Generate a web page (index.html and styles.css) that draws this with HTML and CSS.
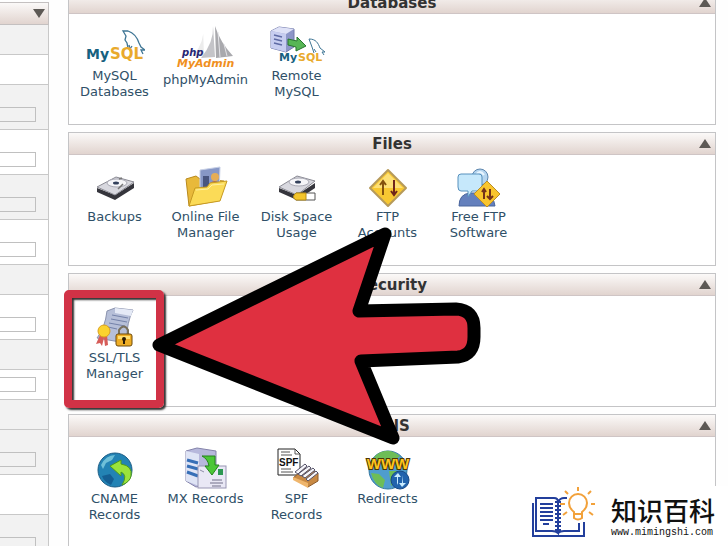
FILE: index.html
```html
<!DOCTYPE html>
<html lang="en">
<head>
  <meta charset="UTF-8">
  <meta name="viewport" content="width=device-width, initial-scale=1.0">
  <title>Control Panel</title>
  <link rel="stylesheet" href="styles.css">
</head>
<body>
  <div class="page">
    <aside class="stats">
      <div class="stats-head"><button class="toggle down" aria-label="Toggle stats"></button></div>
      <div class="stat short alt"></div>
      <div class="stat short"></div>
      <div class="stat alt"><div class="meter"></div></div>
      <div class="stat"><div class="meter"></div></div>
      <div class="stat alt"><div class="meter"></div></div>
      <div class="stat"><div class="meter"></div></div>
      <div class="stat short alt"></div>
      <div class="stat"><div class="meter"></div></div>
      <div class="stat short alt"></div>
      <div class="stat short"><div class="meter"></div></div>
      <div class="stat short alt"></div>
      <div class="stat alt"><div class="meter"></div></div>
      <div class="stat medium"></div>
      <div class="stat alt"><div class="meter"></div></div>
    </aside>

    <main class="panels">
      <section class="panel">
        <header class="panel-head"><h2>Databases</h2><button class="toggle" aria-label="Collapse Databases"></button></header>
        <div class="items">
          <a class="item" href="#">
            <svg class="icon" viewBox="0 0 60 48">
              <path d="M43 28l-1-5-2-3 1-4-3-5 5 0c6 2 9 6 11 12l2 4 4 3-4 0 2 4M44 25l1 4 2-3" fill="none" stroke="#3f7695" stroke-width="1.3"/>
              <text class="logo" x="1" y="39" font-size="14" fill="#17617f">My</text>
              <text class="logo" x="25" y="39" font-size="15" fill="#e9aa2c">SQL</text>
            </svg>
            MySQL Databases
          </a>
          <a class="item" href="#">
            <svg class="icon tall" viewBox="0 0 60 52">
              <path d="M27 8q2 12-9 27l10 1z" fill="#ececec"/>
              <path d="M37 6q1 16-12 32l14-1z" fill="#c4c4c8"/>
              <path d="M39 6l1 32 17-2Q44 22 39 6z" fill="#a9a9ad"/>
              <path d="M42 12l2 25M48 24l3 12" stroke="#e4e4e8"/>
              <text class="logo slant" x="6" y="36" font-size="10" fill="#262673">php</text>
              <text class="logo slant" x="1" y="47" font-size="11" fill="#f0901e">MyAdmin</text>
            </svg>
            phpMyAdmin
          </a>
          <a class="item" href="#">
            <svg class="icon" viewBox="0 0 60 48">
              <path d="M4 11l8-4 15 2v18l-8 5-15-4z" fill="#8d96c8" stroke="#737bab"/>
              <path d="M4 11l15 3v18L4 28z" fill="#c7cdf0"/>
              <path d="M4 11l8-4 15 2-8 5z" fill="#dfe2f7"/>
              <path d="M7 15l8 2M7 19l8 2M7 23l8 2" stroke="#5e6aa4" stroke-width="1.5"/>
              <path d="M21 19l9 2v-4l9 9-10 5v-4l-8-2z" fill="#57b655" stroke="#29752f"/>
              <path d="M47 33l-2-6-3-8c7 0 9 4 11 9l5 4-3 0 2 3M47 29l2 3" fill="none" stroke="#3f7695"/>
              <text class="logo" x="12" y="41" font-size="11" fill="#17617f">My</text>
              <text class="logo" x="31" y="41" font-size="11" fill="#e9aa2c">SQL</text>
            </svg>
            Remote MySQL
          </a>
        </div>
      </section>

      <section class="panel">
        <header class="panel-head"><h2>Files</h2><button class="toggle" aria-label="Collapse Files"></button></header>
        <div class="items">
          <a class="item" href="#">
            <svg class="icon" viewBox="0 0 60 48">
              <path d="M12 27l18 7 19-12v5L30 39l-18-8z" fill="#35353c"/>
              <path d="M12 26l19-10 18 5-19 13z" fill="#d8d8df" stroke="#8b8b94"/>
              <ellipse cx="32" cy="22" rx="10" ry="4" fill="#f5f5f8" stroke="#a9a9b4"/>
              <ellipse cx="31" cy="22" rx="3" ry="1.5" fill="#33415c"/>
              <path d="M33 28l5-5M34 18l3-1" stroke="#777" stroke-width="1.5"/>
            </svg>
            Backups
          </a>
          <a class="item" href="#">
            <svg class="icon" viewBox="0 0 60 48">
              <path d="M10 18l10-3 4 3 24 2-7 20-28 5z" fill="#e8b93a" stroke="#b98a1d"/>
              <path d="M24 9l20-3-1 26-19 1z" fill="#8797c6" stroke="#c7d0e6"/>
              <path d="M27 15h6v14h-6z" fill="#49557f"/>
              <circle cx="39" cy="16" r="4" fill="#e6ad55"/>
              <path d="M34 22q5-4 9 0v8h-9z" fill="#b97242"/>
              <path d="M13 45l6-18 12-1 3-4 17-2-7 20z" fill="#fbdb57" stroke="#c79a22"/>
              <path d="M20 29l12-1 4-4 12-1" fill="none" stroke="#fff0a2"/>
            </svg>
            Online File Manager
          </a>
          <a class="item" href="#">
            <svg class="icon" viewBox="0 0 60 48">
              <path d="M12 27l18 7 18-12v5L30 39l-18-8z" fill="#35353c"/>
              <path d="M12 26l18-11 18 5-18 14z" fill="#d8d8df" stroke="#8b8b94"/>
              <ellipse cx="32" cy="21" rx="10" ry="4" fill="#f5f5f8" stroke="#a9a9b4"/>
              <ellipse cx="31" cy="21" rx="3" ry="1.5" fill="#33415c"/>
              <path d="M29 32h19v7H29q-5-3 0-7z" fill="#fff" stroke="#555"/>
              <path d="M29 32h10v7H29q-5-3 0-7z" fill="#f3c52c" stroke="#b88d15"/>
            </svg>
            Disk Space Usage
          </a>
          <a class="item" href="#">
            <svg class="icon" viewBox="0 0 60 48">
              <path d="M30 9l18 18-18 18-18-18z" fill="#f8c832" stroke="#b69a5a" stroke-width="2" stroke-linejoin="round"/>
              <path d="M30 12l15 15H15z" fill="#fde076"/>
              <path d="M25 34V21M22 24l3-4 3 4" fill="none" stroke="#84520e" stroke-width="2"/>
              <path d="M36 19v14M33 30l3 4 3-4" fill="none" stroke="#70251a" stroke-width="2"/>
            </svg>
            FTP<br>Accounts
          </a>
          <a class="item" href="#">
            <svg class="icon" viewBox="0 0 60 48">
              <path d="M10 45q0-12 11-13h12q12 2 13 13z" fill="#6480bd" stroke="#4b669d"/>
              <circle cx="31" cy="16" r="8" fill="#b5d5ef" stroke="#5d86ae"/>
              <path d="M27 14q4-6 8 0" fill="none" stroke="#eaf6ff" stroke-width="2"/>
              <path d="M12 13h18q3 0 3 3v10q0 4-3 4h-7l-4 6v-6h-7q-3 0-3-4V16q0-3 3-3z" fill="#c6e8fb" stroke="#5790bd"/>
              <path d="M38 20l13 13-13 13-13-13z" fill="#f9c52d" stroke="#b98e27"/>
              <path d="M35 38v-9M33 31l2-3 2 3M41 28v9M38 35l3 3 3-3" fill="none" stroke="#74321a" stroke-width="2"/>
            </svg>
            Free FTP Software
          </a>
        </div>
      </section>

      <section class="panel">
        <header class="panel-head"><h2>Security</h2><button class="toggle" aria-label="Collapse Security"></button></header>
        <div class="items">
          <a class="item marked" href="#">
            <svg class="icon" viewBox="0 0 60 48">
              <path d="M22 9l8-3 18 2q-6 11-7 33l-29-5q8-10 10-27z" fill="#b6bfd8" stroke="#8b93ae"/>
              <path d="M30 6l18 2-2 6-16-3z" fill="#e5eaf6"/>
              <path d="M27 13l16 3M26 17l16 3M24 21l16 3M23 25l9 2" stroke="#7482a9"/>
              <path d="M15 33l-4 9 4-1 2 3 2-8 1 8 3-1-1-10z" fill="#d65c58"/>
              <circle cx="19" cy="29" r="6" fill="#fbd22e" stroke="#dca11c"/>
              <path d="M34 33v-5q5-7 9 0v5" fill="none" stroke="#78705c" stroke-width="2"/>
              <rect x="31" y="32" width="16" height="12" rx="2" fill="#efae25" stroke="#6e4a0b"/>
              <path d="M33 34h12v3H33z" fill="#ffdf72"/>
              <circle cx="39" cy="37" r="2" fill="#2a1a03"/>
              <path d="M39 37v5" stroke="#2a1a03" stroke-width="2"/>
            </svg>
            SSL/TLS Manager
          </a>
        </div>
      </section>

      <section class="panel">
        <header class="panel-head"><h2>DNS</h2><button class="toggle" aria-label="Collapse DNS"></button></header>
        <div class="items">
          <a class="item" href="#">
            <svg class="icon" viewBox="0 0 60 48">
              <circle cx="30" cy="27" r="17" fill="#2383b4" stroke="#1c5d86"/>
              <path d="M16 22q5-10 14-10l-3 5-6 3-3 6z" fill="#6fc0d8"/>
              <path d="M17 33l8-2 4 5-3 6q-7-3-9-9z" fill="#155f93"/>
              <path d="M25 23l11-6v4q12 2 10 12-1 6-9 9 6-10-1-13v4z" fill="#9be33b" stroke="#4d9a1c"/>
            </svg>
            CNAME Records
          </a>
          <a class="item" href="#">
            <svg class="icon" viewBox="0 0 60 48">
              <path d="M10 8l11-3 19 3v32l-20 4-10-6z" fill="#b7b8dc" stroke="#8483aa"/>
              <path d="M10 8l13 3v32l-13-5z" fill="#dfe4f5"/>
              <path d="M11 17l11 3M11 23l11 3M11 29l11 4" stroke="#376fb7" stroke-width="3"/>
              <rect x="22" y="23" width="28" height="22" fill="#e9e8f5" stroke="#9896b3"/>
              <path d="M36 37h10M34 40h13M36 43h9" stroke="#716f88"/>
              <rect x="42" y="26" width="5" height="6" fill="#2c9851"/>
              <path d="M24 27l4 2" stroke="#8e8da8"/>
              <path d="M26 13h13v9h4l-7 10-7-9h4q-1-7-7-10z" fill="#4cc737" stroke="#25851c"/>
            </svg>
            MX Records
          </a>
          <a class="item" href="#">
            <svg class="icon" viewBox="0 0 60 48">
              <path d="M11 6h17l5 5v21H11z" fill="#fff" stroke="#222"/>
              <path d="M28 6v5h5M14 9h9M14 12h11M14 26h10M14 29h12" fill="none" stroke="#555"/>
              <text class="spf" x="12" y="23">SPF</text>
              <path d="M26 35l15 9 10-6v-8l-13-5z" fill="#c88943" stroke="#8d5b2b"/>
              <path d="M28 29l10-8 2 2-9 8zM31 31l11-8 2 2-10 8zM35 33l11-8 2 2-10 8zM39 36l10-8 2 2-10 8z" fill="#f6f6fa" stroke="#555268"/>
              <path d="M26 34l15 6v5l-15-8z" fill="#efb66d"/>
            </svg>
            SPF<br>Records
          </a>
          <a class="item" href="#">
            <svg class="icon" viewBox="0 0 60 48">
              <circle cx="30" cy="27" r="19" fill="#4f9dce" stroke="#2d759f"/>
              <path d="M16 14q12-12 26-1l-5 4H18zM13 30l8 1 6 6-2 8q-9-3-12-15zM31 28l12 0-6 11-4 4z" fill="#6dbd57"/>
              <text class="www" x="30" y="26" text-anchor="middle">WWW</text>
              <circle cx="42" cy="37" r="9" fill="#2163ad" stroke="#174885"/>
              <path d="M39 42v-8h-3l4-4 3 4h-3v6zM45 32v8h3l-4 4-3-4h3" fill="#c9ecff"/>
            </svg>
            Redirects
          </a>
        </div>
      </section>
    </main>

    <svg class="pointer" viewBox="0 0 332 222" aria-hidden="true">
      <path d="M9 119L235 8 209 85 306 83Q324 84 324 102V111Q324 129 308 131L211 135 243 212Z"/>
    </svg>

    <div class="brand">
      <svg class="brand-mark" viewBox="0 -6 66 50" fill="none" stroke="#233f9c" stroke-width="2">
        <path d="M2 7v33h51V26M5 2h18q4 0 4 4v31q-2-2-6-2H5zM27 6q2-4 6-4h3M48 27v8H33q-4 0-6 2"/>
        <path d="M9 8h13M9 12h13M9 16h13M9 20h13M9 24h13M12 28h6"/>
        <path d="M24 6h6M24 10h6M24 14h6M24 18h6M24 22h6M24 26h6M24 30h6M24 34h6"/>
        <g stroke="#f2a13a">
          <path d="M43 16q-5-4-5-9a9 9 0 0 1 18 0q0 5-5 9v6q-4 3-8 0zM43 18h8"/>
          <path d="M47-5v-4M37-2l-3-3M57-2l3-3M34 8h-5M60 8h4M36 16l-4 3M58 16l4 3"/>
        </g>
      </svg>
      <div class="brand-text">
        <div class="brand-name" lang="zh">知识百科</div>
        <div class="brand-url">www.mimingshi.com</div>
      </div>
    </div>
  </div>
</body>
</html>
```
FILE: styles.css
```css
* {
  box-sizing: border-box;
}
body {
  margin: 0;
  font-family: Verdana, "DejaVu Sans", sans-serif;
  font-size: 13px;
  line-height: 16px;
  color: #2f5068;
  background: #fefefe;
}
.page {
  position: relative;
  display: flex;
  gap: 19px;
  height: 100vh;
  padding-right: 12px;
  overflow: hidden;
}

/* stats column */
.stats {
  flex: 0 0 49px;
  padding-top: 2px;
}
.stats-head {
  display: flex;
  justify-content: flex-end;
  align-items: center;
  height: 23px;
  padding-right: 3px;
  border: 1px solid #c4c0c0;
  border-left: 0;
  background: linear-gradient(#fbf9f8, #e1d4cf);
}
.stat {
  display: flex;
  align-items: flex-end;
  height: 45px;
  padding: 0 12px 7px 0;
  border: 1px solid #c8c8c8;
  border-width: 0 1px 1px 0;
  background: #fff;
}
.stat.short {
  height: 30px;
}
.stat.medium {
  height: 40px;
}
.stat.alt {
  background: #f2f2f2;
}
.meter {
  width: 100%;
  height: 15px;
  border: 1px solid #c0c0c0;
  border-left: 0;
}

/* feature panels, scrolled a little past the first title */
.panels {
  flex: 1;
  display: flex;
  flex-direction: column;
  gap: 7px;
  margin-top: -9px;
}
.panel {
  flex: none;
  min-height: 134px;
  border: 1px solid #c4c4c6;
  background: #fff;
}
.panel-head {
  display: grid;
  grid-template-columns: 1fr auto 1fr;
  align-items: center;
  height: 22px;
  border-bottom: 1px solid #cfc5c5;
  background: linear-gradient(#fbf9f8, #e1d4cf);
}
.panel-head h2 {
  grid-column: 2;
  margin: 0;
  font-size: 15px;
  line-height: 20px;
  color: #333;
}
.toggle {
  justify-self: end;
  width: 12px;
  height: 9px;
  padding: 0;
  border: 0;
  background: #5d5955;
  clip-path: polygon(50% 0, 100% 100%, 0 100%);
  cursor: pointer;
}
.panel-head .toggle {
  margin-right: 4px;
}
.toggle.down {
  clip-path: polygon(0 0, 100% 0, 50% 100%);
}
.items {
  display: flex;
  flex-wrap: wrap;
  padding-top: 6px;
}
.item {
  position: relative;
  width: 91px;
  padding: 0 2px;
  text-align: center;
  color: inherit;
  text-decoration: none;
}
.icon {
  display: block;
  width: 60px;
  height: 48px;
  margin: 0 auto;
}
.icon.tall {
  height: 52px;
}
.logo {
  font-weight: bold;
}
.slant {
  font-style: italic;
}
.spf {
  font: bold 10px "Liberation Sans", sans-serif;
  fill: #111;
}
.www {
  font: bold 15px "Liberation Sans", sans-serif;
  fill: #fdc51f;
  stroke: #4c3505;
  stroke-width: 2px;
  paint-order: stroke;
}

/* highlight and pointer drawn over the page */
.marked::after {
  content: "";
  position: absolute;
  inset: -12px -4px auto -5px;
  box-sizing: border-box;
  height: 118px;
  border: 8px solid #d13246;
  border-radius: 5px;
  box-shadow: 2px 2px 2px #333, inset 2px 2px 2px #333;
}
.pointer {
  position: absolute;
  left: 150px;
  top: 226px;
  width: 332px;
  height: 222px;
}
.pointer path {
  fill: #df3040;
  stroke: #000;
  stroke-width: 13px;
  stroke-linejoin: round;
}

/* site mark */
.brand {
  position: absolute;
  right: 0;
  bottom: 0;
  display: flex;
  align-items: flex-end;
  gap: 14px;
  padding: 4px 13px 6px 12px;
  background: #fff;
  color: #111;
}
.brand-mark {
  width: 66px;
  height: 50px;
  overflow: visible;
}
.brand-name {
  font: 500 26px/32px "Noto Sans CJK SC", sans-serif;
}
.brand-url {
  font: 10px/14px "Liberation Mono", monospace;
}
```
